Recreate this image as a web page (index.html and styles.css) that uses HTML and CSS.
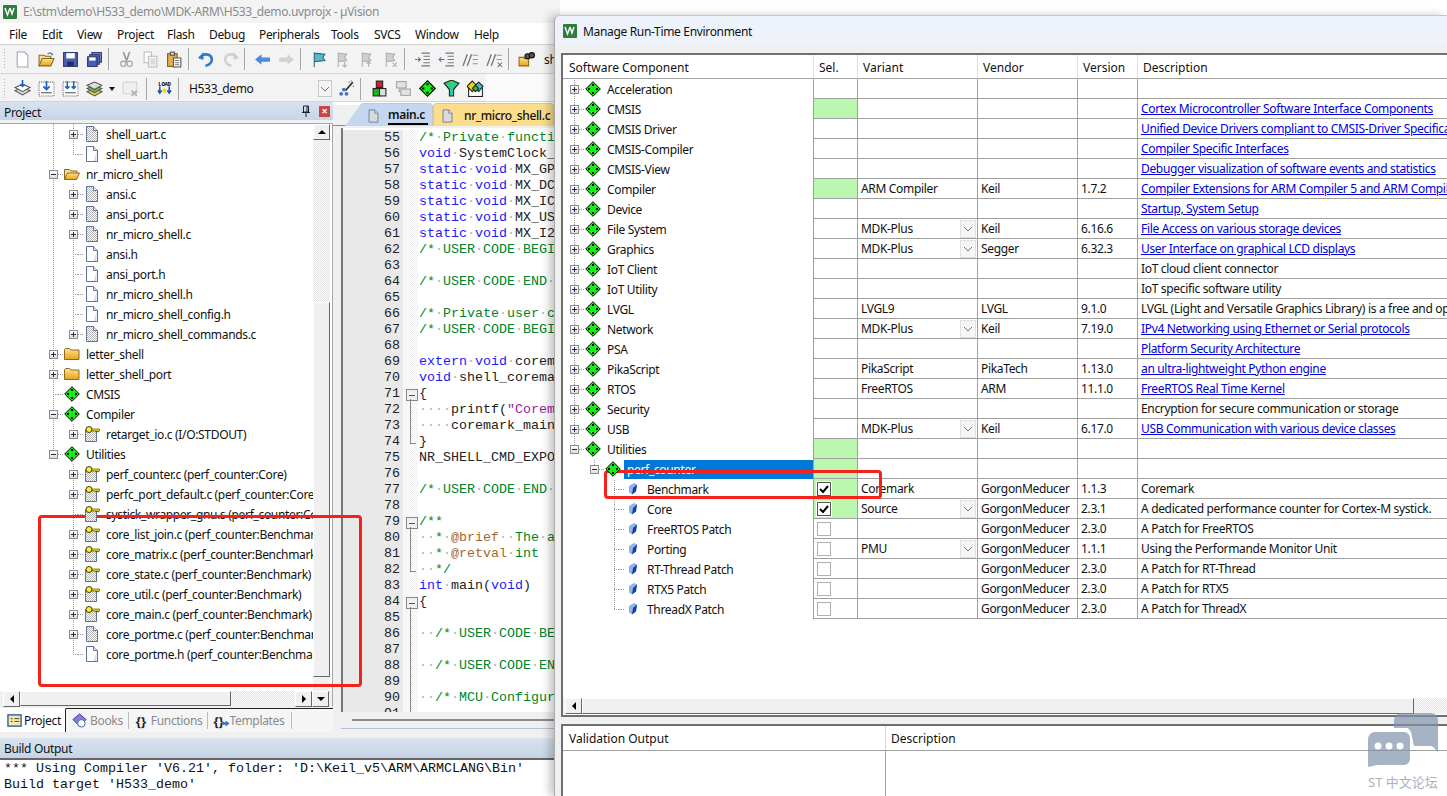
FILE: index.html
```html
<!DOCTYPE html>
<html lang="en">
<head>
    <meta charset="UTF-8">
    <title>Manage Run-Time Environment</title>
    <link rel="stylesheet" href="styles.css">
</head>
<body>
    <svg class="defs" width="0" height="0">
        <defs>
            <pattern id="dith" width="2" height="2" patternUnits="userSpaceOnUse">
                <rect width="2" height="2" fill="#fff"/>
                <rect width="1" height="1" fill="#b4b4b4"/>
                <rect x="1" y="1" width="1" height="1" fill="#b4b4b4"/>
            </pattern>
            <linearGradient id="fold" x1="0" y1="0" x2="0" y2="1">
                <stop offset="0" stop-color="#ffe48a"/>
                <stop offset="1" stop-color="#e8a21e"/>
            </linearGradient>
            <symbol id="i-file" viewBox="0 0 16 16">
                <path d="M2.500.5h7l4 4v11h-11z" fill="#fff" stroke="#5b7497"/>
                <path d="M9.500.5v4h4" fill="#dfe7f3" stroke="#5b7497"/>
                <path d="M12.500 6v9h-3z" fill="#d4def0"/>
            </symbol>
            <symbol id="i-cfile" viewBox="0 0 16 16">
                <path d="M2.500.5h7l4 4v11h-11z" fill="url(#dith)" stroke="#5b7497"/>
                <path d="M9.500.5v4h4" fill="#eef2f8" stroke="#5b7497"/>
            </symbol>
            <symbol id="i-key" viewBox="0 0 16 16">
                <path d="M1.500 3.500h11v12h-11z" fill="url(#dith)" stroke="#5b7497"/>
                <circle cx="5" cy="3.500" r="3" fill="#ffef2e" stroke="#3d3d00"/>
                <path d="M8 3h7.500v2h-1v1h-1V5h-1v1h-1V5H8z" fill="#f4d90c" stroke="#3d3d00" stroke-width=".6"/>
            </symbol>
            <symbol id="i-open" viewBox="0 0 16 16">
                <path d="M.5 13.500v-10h5l1.500 1.500h6v2" fill="#f6dc94" stroke="#8a6a20"/>
                <path d="M.5 13.500l3-6.500h12l-3 6.500z" fill="url(#fold)" stroke="#8a6a20"/>
            </symbol>
            <symbol id="i-closed" viewBox="0 0 16 16">
                <path d="M.5 13.500v-10l1-1h4l1.500 1.500h8v9.500z" fill="url(#fold)" stroke="#8a6a20"/>
            </symbol>
            <symbol id="i-dia" viewBox="0 0 16 16">
                <path d="M8 .7L15.300 8 8 15.300.7 8z" fill="#14f014" stroke="#000"/>
                <path d="M7 3h2v2H7zM3 7h2v2H3zM11 7h2v2h-2zM7 11h2v2H7z" fill="#000"/>
            </symbol>
            <symbol id="i-gem" viewBox="0 0 16 16">
                <path d="M4 5l5-3 3 1.500-1 7-4 3-3-2z" fill="#8db4e8"/>
                <path d="M8 7l4-3.500-1 7-4 3z" fill="#1f3f9c"/>
            </symbol>
            <symbol id="i-chev" viewBox="0 0 10 6">
                <path d="M1 1l4 4 4-4" fill="none" stroke="#777"/>
            </symbol>
        </defs>
    </svg>

    <div class="window main-window">
        <div class="titlebar">
            <svg class="app-icon" viewBox="0 0 14 14"><rect width="14" height="14" rx="1" fill="#2f7d3c"/><path d="M2 3l2.500 7L7 3M7 3l2 6 2-6" fill="none" stroke="#fff" stroke-width="1.400"/></svg>
            <span>E:\stm\demo\H533_demo\MDK-ARM\H533_demo.uvprojx - µVision</span>
        </div>
        <div class="menubar">
            <span style="width:33px">File</span><span style="width:35px">Edit</span><span style="width:40px">View</span><span style="width:50px">Project</span><span style="width:42px">Flash</span><span style="width:50px">Debug</span><span style="width:72px">Peripherals</span><span style="width:43px">Tools</span><span style="width:41px">SVCS</span><span style="width:59px">Window</span><span>Help</span>
        </div>
        <div class="toolbar">
            <span class="grip"></span>
            <span class="tb"><svg viewBox="0 0 16 16"><path d="M3 1h7l3 3v11H3z" fill="#fff" stroke="#9aa7b8"/></svg></span>
            <span class="tb"><svg viewBox="0 0 16 16"><path d="M1 14V4h5l1 1h5v2" fill="#f6dc94" stroke="#8a6a20"/><path d="M1 14l3-7h11l-3 7z" fill="url(#fold)" stroke="#8a6a20"/><path d="M9 3c2-2 4-1 5 1" fill="none" stroke="#4a6a94"/></svg></span>
            <span class="tb"><svg viewBox="0 0 16 16"><rect x="1.500" y="1.500" width="13" height="13" fill="#4b5fb5" stroke="#2b3570"/><rect x="4" y="2" width="8" height="5" fill="#fff"/><rect x="5" y="10" width="6" height="4" fill="#222c5c"/></svg></span>
            <span class="tb"><svg viewBox="0 0 16 16"><rect x="5.500" y="1.500" width="9" height="9" fill="#7d8dc8" stroke="#2b3570"/><rect x="3.500" y="3.500" width="9" height="9" fill="#5e70bd" stroke="#2b3570"/><rect x="1.500" y="5.500" width="9" height="9" fill="#4b5fb5" stroke="#2b3570"/><rect x="3" y="6" width="6" height="3" fill="#fff"/></svg></span>
            <span class="tb-sep"></span>
            <span class="tb off"><svg viewBox="0 0 16 16"><path d="M5 1l3 8 3-8M11 1L8 9" fill="none" stroke="#777" stroke-width="1.500"/><circle cx="5" cy="12" r="2.500" fill="none" stroke="#888"/><circle cx="11" cy="12" r="2.500" fill="none" stroke="#888"/></svg></span>
            <span class="tb off"><svg viewBox="0 0 16 16"><path d="M2 1h7v10H2z" fill="#fff" stroke="#aaa"/><path d="M6 5h8v10H6z" fill="#eee" stroke="#aaa"/><path d="M8 8h4M8 10h4M8 12h4" stroke="#bbb"/></svg></span>
            <span class="tb"><svg viewBox="0 0 16 16"><rect x="1.500" y="2.500" width="9" height="12" fill="#e0b050" stroke="#7a5a20"/><rect x="4" y="1" width="4" height="3" fill="#ccc" stroke="#555"/><path d="M7 6.500h7v8.500H7z" fill="#fff" stroke="#555"/><path d="M8.500 9h4M8.500 11h4M8.500 13h4" stroke="#777"/></svg></span>
            <span class="tb-sep"></span>
            <span class="tb"><svg viewBox="0 0 16 16"><path d="M4 8V4L1 7M4 4c5-2 9 0 9 4 0 3-2 5-6 6" fill="none" stroke="#2f78d0" stroke-width="2.400"/></svg></span>
            <span class="tb off"><svg viewBox="0 0 16 16"><path d="M12 8V4l3 3M12 4C7 2 3 4 3 8c0 3 2 5 6 6" fill="none" stroke="#c4c8cc" stroke-width="2.400"/></svg></span>
            <span class="tb-sep"></span>
            <span class="tb"><svg viewBox="0 0 16 16"><path d="M1 8l6-5v3h8v4H7v3z" fill="#4a8ae0"/></svg></span>
            <span class="tb off"><svg viewBox="0 0 16 16"><path d="M15 8L9 3v3H1v4h8v3z" fill="#c8c8c8"/></svg></span>
            <span class="tb-sep"></span>
            <span class="tb"><svg viewBox="0 0 16 16"><path d="M4 15V2l10 1-2 3 2 3-10 1" fill="#5ab8c8" stroke="#2a6a80"/></svg></span>
            <span class="tb off"><svg viewBox="0 0 16 16"><path d="M4 15V2l8 1-2 3 2 3-8 1" fill="#c4c4c4" stroke="#999"/><path d="M10 10v5M8 13l2 2 2-2" stroke="#999" fill="none"/></svg></span>
            <span class="tb off"><svg viewBox="0 0 16 16"><path d="M4 15V2l8 1-2 3 2 3-8 1" fill="#c4c4c4" stroke="#999"/><path d="M10 15v-5M8 12l2-2 2 2" stroke="#999" fill="none"/></svg></span>
            <span class="tb off"><svg viewBox="0 0 16 16"><path d="M4 15V2l8 1-2 3 2 3-8 1" fill="#c4c4c4" stroke="#999"/><path d="M10 11l4 4M14 11l-4 4" stroke="#999"/></svg></span>
            <span class="tb-sep"></span>
            <span class="tb"><svg viewBox="0 0 16 16"><path d="M7 2h8M9 5h6M9 8h6M9 11h6M7 14h8" stroke="#777"/><path d="M1 8h5M4 6l2 2-2 2" fill="none" stroke="#4a7ab0"/></svg></span>
            <span class="tb"><svg viewBox="0 0 16 16"><path d="M7 2h8M9 5h6M9 8h6M9 11h6M7 14h8" stroke="#777"/><path d="M6 8H1M3 6L1 8l2 2" fill="none" stroke="#4a7ab0"/></svg></span>
            <span class="tb"><svg viewBox="0 0 16 16"><path d="M1 14L5 3M5 14L9 3" stroke="#777" stroke-width="1.300"/><path d="M10 4h5M10 8h5M10 12h5" stroke="#999"/></svg></span>
            <span class="tb"><svg viewBox="0 0 16 16"><path d="M1 14L5 3M5 14L9 3" stroke="#777" stroke-width="1.300"/><path d="M10 4h5M10 8h5" stroke="#999"/><path d="M11 11l4 4M15 11l-4 4" stroke="#777"/></svg></span>
            <span class="tb-sep"></span>
            <span class="tb"><svg viewBox="0 0 16 16"><path d="M1 14V6h4l1 1h4v7z" fill="url(#fold)" stroke="#8a6a20"/><circle cx="9" cy="5" r="2.500" fill="#555" stroke="#111"/><circle cx="13" cy="4" r="2.500" fill="#555" stroke="#111"/></svg></span>
            <span class="tb-clip">shell</span>
        </div>
        <div class="toolbar short">
            <span class="grip"></span>
            <span class="tb"><svg viewBox="0 0 16 16"><path d="M1 10l7-3 7 3-7 4z" fill="#ddd" stroke="#555"/><path d="M1 7l7-3 7 3-7 4z" fill="#fff" stroke="#555"/><path d="M8 0v6M6 4l2 2 2-2" fill="none" stroke="#2060c0" stroke-width="1.500"/></svg></span>
            <span class="tb"><svg viewBox="0 0 16 16"><rect x="1" y="2" width="14" height="13" fill="#fff" stroke="#666" stroke-dasharray="1 1"/><path d="M8 1v8M5 6l3 3 3-3" fill="none" stroke="#2060c0" stroke-width="1.600"/><path d="M3 12h10" stroke="#555"/></svg></span>
            <span class="tb"><svg viewBox="0 0 16 16"><rect x="1" y="2" width="14" height="13" fill="#fff" stroke="#666" stroke-dasharray="1 1"/><path d="M5 1v7M3 6l2 2 2-2M11 1v7M9 6l2 2 2-2" fill="none" stroke="#2060c0" stroke-width="1.400"/><path d="M3 12h10" stroke="#555"/></svg></span>
            <span class="tb"><svg viewBox="0 0 16 16"><path d="M1 11l7-3 7 3-7 4z" fill="#e8d040" stroke="#555"/><path d="M1 8l7-3 7 3-7 4z" fill="#70c050" stroke="#555"/><path d="M1 5l7-3 7 3-7 4z" fill="#ddd" stroke="#555"/></svg></span>
            <span class="tb-arrow"></span>
            <span class="tb off"><svg viewBox="0 0 16 16"><rect x="1" y="2" width="13" height="11" fill="#eee" stroke="#aaa" stroke-dasharray="1 1"/><path d="M9 10l5 5M14 10l-5 5" stroke="#999" stroke-width="1.400"/></svg></span>
            <span class="tb-sep wide"></span>
            <span class="tb"><svg viewBox="0 0 18 18"><text x="9" y="6" class="load-text">LOAD</text><path d="M4 7v6M2 11l2 3 2-3M14 7v6M12 11l2 3 2-3" fill="none" stroke="#1f50b0" stroke-width="1.600"/><path d="M9 8l1 2h2l-1.500 1.500L11 14l-2-1-2 1 .5-2.500L6 10h2z" fill="#f0d800"/></svg></span>
            <span class="tb-sep"></span>
            <div class="target"><span>H533_demo</span><b><svg width="10" height="6"><use href="#i-chev"/></svg></b></div>
            <span class="tb"><svg viewBox="0 0 16 16"><path d="M7 10l7-8" stroke="#333" stroke-width="1.500"/><circle cx="3" cy="13" r="1.800" fill="#4a70c0"/><circle cx="8" cy="13" r="1.800" fill="#4a70c0"/><circle cx="5.500" cy="9" r="1.800" fill="#4a70c0"/><path d="M10 2h1M14 6h1M12 1h1" stroke="#d03020"/></svg></span>
            <span class="tb-sep wide2"></span>
            <span class="tb"><svg viewBox="0 0 16 16"><rect x="5" y="1" width="6" height="6" fill="#d02020" stroke="#222"/><rect x="2" y="8" width="6" height="7" fill="#20b020" stroke="#222"/><rect x="8" y="8" width="6" height="7" fill="#ddd" stroke="#222"/></svg></span>
            <span class="tb off"><svg viewBox="0 0 16 16"><rect x="1.500" y="1.500" width="9" height="6" fill="#ddd" stroke="#888"/><rect x="5.500" y="8.500" width="9" height="6" fill="#ddd" stroke="#888"/><path d="M4 8v3h1" stroke="#888" fill="none"/></svg></span>
            <span class="tb"><svg viewBox="0 0 16 16"><use href="#i-dia"/></svg></span>
            <span class="tb"><svg viewBox="0 0 16 16"><path d="M1 3l7-3 7 3-5 6v6H6V9z" fill="#30c8a0" stroke="#222"/><path d="M4 3l4-2 3 2-4 2z" fill="#30e030"/></svg></span>
            <span class="tb"><svg viewBox="0 0 16 16"><rect x="1.500" y="7.500" width="13" height="8" fill="#fff" stroke="#222"/><path d="M5 1l5 5-5 5-5-5z" fill="#f0d020" stroke="#222"/><path d="M11 2l4 4-4 5-4-5z" fill="#30c8d8" stroke="#222"/><path d="M8 5l3 3-3 3-3-3z" fill="#20d020" stroke="#222"/></svg></span>
        </div>

        <div class="workspace">
            <div class="project-panel">
                <div class="panel-head">
                    <span>Project</span>
                    <svg class="pin" viewBox="0 0 10 12"><path d="M2.500 1h5v6h-5zM1 7.500h8M5 8v4M6 1v6" fill="none" stroke="#222"/></svg>
                    <span class="panel-close">×</span>
                </div>
                <div class="tree-wrap">
                    <div class="tree">
                        <div class="node lvl3 ga gb"><i class="exp"></i><i class="dash"></i><svg class="ico"><use href="#i-cfile"/></svg><span>shell_uart.c</span></div>
                        <div class="node lvl3 ga gb-end"><i class="exp leaf"></i><i class="dash"></i><svg class="ico"><use href="#i-file"/></svg><span>shell_uart.h</span></div>
                        <div class="node lvl2 ga"><i class="exp open"></i><i class="dash"></i><svg class="ico"><use href="#i-open"/></svg><span>nr_micro_shell</span></div>
                        <div class="node lvl3 ga gb"><i class="exp"></i><i class="dash"></i><svg class="ico"><use href="#i-cfile"/></svg><span>ansi.c</span></div>
                        <div class="node lvl3 ga gb"><i class="exp"></i><i class="dash"></i><svg class="ico"><use href="#i-cfile"/></svg><span>ansi_port.c</span></div>
                        <div class="node lvl3 ga gb"><i class="exp"></i><i class="dash"></i><svg class="ico"><use href="#i-cfile"/></svg><span>nr_micro_shell.c</span></div>
                        <div class="node lvl3 ga gb"><i class="exp leaf"></i><i class="dash"></i><svg class="ico"><use href="#i-file"/></svg><span>ansi.h</span></div>
                        <div class="node lvl3 ga gb"><i class="exp leaf"></i><i class="dash"></i><svg class="ico"><use href="#i-file"/></svg><span>ansi_port.h</span></div>
                        <div class="node lvl3 ga gb"><i class="exp leaf"></i><i class="dash"></i><svg class="ico"><use href="#i-file"/></svg><span>nr_micro_shell.h</span></div>
                        <div class="node lvl3 ga gb"><i class="exp leaf"></i><i class="dash"></i><svg class="ico"><use href="#i-file"/></svg><span>nr_micro_shell_config.h</span></div>
                        <div class="node lvl3 ga gb-end"><i class="exp"></i><i class="dash"></i><svg class="ico"><use href="#i-cfile"/></svg><span>nr_micro_shell_commands.c</span></div>
                        <div class="node lvl2 ga"><i class="exp"></i><i class="dash"></i><svg class="ico"><use href="#i-closed"/></svg><span>letter_shell</span></div>
                        <div class="node lvl2 ga"><i class="exp"></i><i class="dash"></i><svg class="ico"><use href="#i-closed"/></svg><span>letter_shell_port</span></div>
                        <div class="node lvl2 ga"><i class="exp leaf"></i><i class="dash"></i><svg class="ico"><use href="#i-dia"/></svg><span>CMSIS</span></div>
                        <div class="node lvl2 ga"><i class="exp open"></i><i class="dash"></i><svg class="ico"><use href="#i-dia"/></svg><span>Compiler</span></div>
                        <div class="node lvl3 ga gb-end"><i class="exp"></i><i class="dash"></i><svg class="ico"><use href="#i-key"/></svg><span>retarget_io.c (I/O:STDOUT)</span></div>
                        <div class="node lvl2 ga-end"><i class="exp open"></i><i class="dash"></i><svg class="ico"><use href="#i-dia"/></svg><span>Utilities</span></div>
                        <div class="node lvl3 gb"><i class="exp"></i><i class="dash"></i><svg class="ico"><use href="#i-key"/></svg><span>perf_counter.c (perf_counter:Core)</span></div>
                        <div class="node lvl3 gb"><i class="exp"></i><i class="dash"></i><svg class="ico"><use href="#i-key"/></svg><span>perfc_port_default.c (perf_counter:Core)</span></div>
                        <div class="node lvl3 gb"><i class="exp leaf"></i><i class="dash"></i><svg class="ico"><use href="#i-key"/></svg><span>systick_wrapper_gnu.s (perf_counter:Core)</span></div>
                        <div class="node lvl3 gb"><i class="exp"></i><i class="dash"></i><svg class="ico"><use href="#i-key"/></svg><span>core_list_join.c (perf_counter:Benchmark)</span></div>
                        <div class="node lvl3 gb"><i class="exp"></i><i class="dash"></i><svg class="ico"><use href="#i-key"/></svg><span>core_matrix.c (perf_counter:Benchmark)</span></div>
                        <div class="node lvl3 gb"><i class="exp"></i><i class="dash"></i><svg class="ico"><use href="#i-key"/></svg><span>core_state.c (perf_counter:Benchmark)</span></div>
                        <div class="node lvl3 gb"><i class="exp"></i><i class="dash"></i><svg class="ico"><use href="#i-key"/></svg><span>core_util.c (perf_counter:Benchmark)</span></div>
                        <div class="node lvl3 gb"><i class="exp"></i><i class="dash"></i><svg class="ico"><use href="#i-key"/></svg><span>core_main.c (perf_counter:Benchmark)</span></div>
                        <div class="node lvl3 gb"><i class="exp"></i><i class="dash"></i><svg class="ico"><use href="#i-cfile"/></svg><span>core_portme.c (perf_counter:Benchmark)</span></div>
                        <div class="node lvl3 gb-end"><i class="exp leaf"></i><i class="dash"></i><svg class="ico"><use href="#i-file"/></svg><span>core_portme.h (perf_counter:Benchmark)</span></div>
                    </div>
                    <div class="vscroll">
                        <span class="sb-btn"><i class="tri up"></i></span>
                        <span class="sb-track t1"></span>
                        <span class="sb-thumb t2"></span>
                        <span class="sb-track"></span>
                    </div>
                </div>
                <div class="hscroll">
                    <span class="sb-btn"><i class="tri left"></i></span>
                    <span class="sb-thumb h1"></span>
                    <span class="sb-track h2"></span>
                    <span class="sb-btn"><i class="tri right"></i></span>
                    <span class="sb-btn"><i class="tri down"></i></span>
                </div>
                <div class="panel-tabs">
                    <span class="ptab active"><svg viewBox="0 0 16 16"><rect x="1" y="2" width="14" height="12" fill="#f5e8a0" stroke="#3060b0" stroke-width="1.500"/><path d="M4 6h2M8 6h5M4 9h2M8 9h5" stroke="#444"/></svg>Project</span>
                    <span class="ptab sep bk"><svg viewBox="0 0 16 16"><path d="M1 7l7-6 7 6-7 7z" fill="#8a7ae0" stroke="#3a3a90"/><circle cx="10" cy="11" r="4" fill="#fff" stroke="#3060b0"/></svg>Books</span>
                    <span class="ptab sep fn"><b class="brace">{}</b>Functions</span>
                    <span class="ptab sep"><b class="brace">{}</b><i class="mini-arrow"></i>Templates</span>
                </div>
            </div>

            <div class="editor-panel">
                <div class="tabs">
                    <span class="doc-tab active"><svg class="ico"><use href="#i-cfile"/></svg><span>main.c</span></span>
                    <span class="doc-tab"><svg class="ico"><use href="#i-cfile"/></svg><span>nr_micro_shell.c</span></span>
                </div>
                <div class="code">
                    <div class="ln"><b>55</b><s></s><code><u>/*<i>·</i>Private<i>·</i>function<i>·</i>prototypes</u></code></div>
                    <div class="ln"><b>56</b><s></s><code><em>void</em><i>·</i>SystemClock_Config(void);</code></div>
                    <div class="ln"><b>57</b><s></s><code><em>static</em><i>·</i><em>void</em><i>·</i>MX_GPIO_Init(void);</code></div>
                    <div class="ln"><b>58</b><s></s><code><em>static</em><i>·</i><em>void</em><i>·</i>MX_DCACHE1_Init(void);</code></div>
                    <div class="ln"><b>59</b><s></s><code><em>static</em><i>·</i><em>void</em><i>·</i>MX_ICACHE_Init(void);</code></div>
                    <div class="ln"><b>60</b><s></s><code><em>static</em><i>·</i><em>void</em><i>·</i>MX_USART1_Init(void);</code></div>
                    <div class="ln"><b>61</b><s></s><code><em>static</em><i>·</i><em>void</em><i>·</i>MX_I2C1_Init(void);</code></div>
                    <div class="ln"><b>62</b><s></s><code><u>/*<i>·</i>USER<i>·</i>CODE<i>·</i>BEGIN<i>·</i>PFP</u></code></div>
                    <div class="ln"><b>63</b><s></s><code></code></div>
                    <div class="ln"><b>64</b><s></s><code><u>/*<i>·</i>USER<i>·</i>CODE<i>·</i>END<i>·</i>PFP</u></code></div>
                    <div class="ln"><b>65</b><s></s><code></code></div>
                    <div class="ln"><b>66</b><s></s><code><u>/*<i>·</i>Private<i>·</i>user<i>·</i>code</u></code></div>
                    <div class="ln"><b>67</b><s></s><code><u>/*<i>·</i>USER<i>·</i>CODE<i>·</i>BEGIN<i>·</i>0</u></code></div>
                    <div class="ln"><b>68</b><s></s><code></code></div>
                    <div class="ln"><b>69</b><s></s><code><em>extern</em><i>·</i><em>void</em><i>·</i>coremark_main(void);</code></div>
                    <div class="ln"><b>70</b><s></s><code><em>void</em><i>·</i>shell_coremark(int</code></div>
                    <div class="ln"><b>71</b><s class="fold"></s><code>{</code></div>
                    <div class="ln"><b>72</b><s class="fold-mid"></s><code><i>····</i>printf(<q>"Coremark</q></code></div>
                    <div class="ln"><b>73</b><s class="fold-mid"></s><code><i>····</i>coremark_main();</code></div>
                    <div class="ln"><b>74</b><s class="fold-end"></s><code>}</code></div>
                    <div class="ln"><b>75</b><s></s><code>NR_SHELL_CMD_EXPORT(</code></div>
                    <div class="ln"><b>76</b><s></s><code></code></div>
                    <div class="ln"><b>77</b><s></s><code><u>/*<i>·</i>USER<i>·</i>CODE<i>·</i>END<i>·</i>0</u></code></div>
                    <div class="ln"><b>78</b><s></s><code></code></div>
                    <div class="ln"><b>79</b><s class="fold"></s><code><u>/**</u></code></div>
                    <div class="ln"><b>80</b><s class="fold-mid"></s><code><i>··</i><u>*<i>·</i><dfn>@brief</dfn><i>··</i>The<i>·</i>application</u></code></div>
                    <div class="ln"><b>81</b><s class="fold-mid"></s><code><i>··</i><u>*<i>·</i><dfn>@retval</dfn><i>·</i>int</u></code></div>
                    <div class="ln"><b>82</b><s class="fold-end"></s><code><i>··</i><u>*/</u></code></div>
                    <div class="ln"><b>83</b><s></s><code><em>int</em><i>·</i>main(<em>void</em>)</code></div>
                    <div class="ln"><b>84</b><s class="fold"></s><code>{</code></div>
                    <div class="ln"><b>85</b><s class="fold-mid"></s><code></code></div>
                    <div class="ln"><b>86</b><s class="fold-mid"></s><code><i>··</i><u>/*<i>·</i>USER<i>·</i>CODE<i>·</i>BEGIN<i>·</i>1</u></code></div>
                    <div class="ln"><b>87</b><s class="fold-mid"></s><code></code></div>
                    <div class="ln"><b>88</b><s class="fold-mid"></s><code><i>··</i><u>/*<i>·</i>USER<i>·</i>CODE<i>·</i>END<i>·</i>1</u></code></div>
                    <div class="ln"><b>89</b><s class="fold-mid"></s><code></code></div>
                    <div class="ln"><b>90</b><s class="fold-mid"></s><code><i>··</i><u>/*<i>·</i>MCU<i>·</i>Configuration</u></code></div>
                    <div class="ln"><b>91</b><s class="fold-mid"></s><code></code></div>
                </div>
                <div class="code-scroll"><span></span></div>
            </div>
        </div>

        <div class="build-head">Build Output</div>
        <pre class="build-text">*** Using Compiler 'V6.21', folder: 'D:\Keil_v5\ARM\ARMCLANG\Bin'
Build target 'H533_demo'</pre>
    </div>

    <div class="window dialog">
        <div class="dialog-title">
            <svg class="app-icon" viewBox="0 0 14 14"><rect width="14" height="14" rx="1" fill="#2f7d3c"/><path d="M2 3l2.500 7L7 3M7 3l2 6 2-6" fill="none" stroke="#fff" stroke-width="1.400"/></svg>
            <span>Manage Run-Time Environment</span>
        </div>
        <div class="rte-box">
            <div class="rte-scroll">
                <table class="rte">
                    <colgroup><col class="c1"><col class="c2"><col class="c3"><col class="c4"><col class="c5"><col class="c6"></colgroup>
                    <thead>
                        <tr><th>Software Component</th><th>Sel.</th><th>Variant</th><th>Vendor</th><th>Version</th><th>Description</th></tr>
                    </thead>
                    <tbody>
                        <tr><td><div class="node lvl1 ga"><i class="exp"></i><i class="dash"></i><svg class="ico"><use href="#i-dia"/></svg><span>Acceleration</span></div></td><td></td><td></td><td></td><td></td><td></td></tr>
                        <tr><td><div class="node lvl1 ga"><i class="exp"></i><i class="dash"></i><svg class="ico"><use href="#i-dia"/></svg><span>CMSIS</span></div></td><td class="on"></td><td></td><td></td><td></td><td><a>Cortex Microcontroller Software Interface Components</a></td></tr>
                        <tr><td><div class="node lvl1 ga"><i class="exp"></i><i class="dash"></i><svg class="ico"><use href="#i-dia"/></svg><span>CMSIS Driver</span></div></td><td></td><td></td><td></td><td></td><td><a>Unified Device Drivers compliant to CMSIS-Driver Specifications</a></td></tr>
                        <tr><td><div class="node lvl1 ga"><i class="exp"></i><i class="dash"></i><svg class="ico"><use href="#i-dia"/></svg><span>CMSIS-Compiler</span></div></td><td></td><td></td><td></td><td></td><td><a>Compiler Specific Interfaces</a></td></tr>
                        <tr><td><div class="node lvl1 ga"><i class="exp"></i><i class="dash"></i><svg class="ico"><use href="#i-dia"/></svg><span>CMSIS-View</span></div></td><td></td><td></td><td></td><td></td><td><a>Debugger visualization of software events and statistics</a></td></tr>
                        <tr><td><div class="node lvl1 ga"><i class="exp"></i><i class="dash"></i><svg class="ico"><use href="#i-dia"/></svg><span>Compiler</span></div></td><td class="on"></td><td>ARM Compiler</td><td>Keil</td><td>1.7.2</td><td><a>Compiler Extensions for ARM Compiler 5 and ARM Compiler 6</a></td></tr>
                        <tr><td><div class="node lvl1 ga"><i class="exp"></i><i class="dash"></i><svg class="ico"><use href="#i-dia"/></svg><span>Device</span></div></td><td></td><td></td><td></td><td></td><td><a>Startup, System Setup</a></td></tr>
                        <tr><td><div class="node lvl1 ga"><i class="exp"></i><i class="dash"></i><svg class="ico"><use href="#i-dia"/></svg><span>File System</span></div></td><td></td><td><div class="pick">MDK-Plus<b><svg width="10" height="6"><use href="#i-chev"/></svg></b></div></td><td>Keil</td><td>6.16.6</td><td><a>File Access on various storage devices</a></td></tr>
                        <tr><td><div class="node lvl1 ga"><i class="exp"></i><i class="dash"></i><svg class="ico"><use href="#i-dia"/></svg><span>Graphics</span></div></td><td></td><td><div class="pick">MDK-Plus<b><svg width="10" height="6"><use href="#i-chev"/></svg></b></div></td><td>Segger</td><td>6.32.3</td><td><a>User Interface on graphical LCD displays</a></td></tr>
                        <tr><td><div class="node lvl1 ga"><i class="exp"></i><i class="dash"></i><svg class="ico"><use href="#i-dia"/></svg><span>IoT Client</span></div></td><td></td><td></td><td></td><td></td><td>IoT cloud client connector</td></tr>
                        <tr><td><div class="node lvl1 ga"><i class="exp"></i><i class="dash"></i><svg class="ico"><use href="#i-dia"/></svg><span>IoT Utility</span></div></td><td></td><td></td><td></td><td></td><td>IoT specific software utility</td></tr>
                        <tr><td><div class="node lvl1 ga"><i class="exp"></i><i class="dash"></i><svg class="ico"><use href="#i-dia"/></svg><span>LVGL</span></div></td><td></td><td>LVGL9</td><td>LVGL</td><td>9.1.0</td><td>LVGL (Light and Versatile Graphics Library) is a free and open-source</td></tr>
                        <tr><td><div class="node lvl1 ga"><i class="exp"></i><i class="dash"></i><svg class="ico"><use href="#i-dia"/></svg><span>Network</span></div></td><td></td><td><div class="pick">MDK-Plus<b><svg width="10" height="6"><use href="#i-chev"/></svg></b></div></td><td>Keil</td><td>7.19.0</td><td><a>IPv4 Networking using Ethernet or Serial protocols</a></td></tr>
                        <tr><td><div class="node lvl1 ga"><i class="exp"></i><i class="dash"></i><svg class="ico"><use href="#i-dia"/></svg><span>PSA</span></div></td><td></td><td></td><td></td><td></td><td><a>Platform Security Architecture</a></td></tr>
                        <tr><td><div class="node lvl1 ga"><i class="exp"></i><i class="dash"></i><svg class="ico"><use href="#i-dia"/></svg><span>PikaScript</span></div></td><td></td><td>PikaScript</td><td>PikaTech</td><td>1.13.0</td><td><a>an ultra-lightweight Python engine</a></td></tr>
                        <tr><td><div class="node lvl1 ga"><i class="exp"></i><i class="dash"></i><svg class="ico"><use href="#i-dia"/></svg><span>RTOS</span></div></td><td></td><td>FreeRTOS</td><td>ARM</td><td>11.1.0</td><td><a>FreeRTOS Real Time Kernel</a></td></tr>
                        <tr><td><div class="node lvl1 ga"><i class="exp"></i><i class="dash"></i><svg class="ico"><use href="#i-dia"/></svg><span>Security</span></div></td><td></td><td></td><td></td><td></td><td>Encryption for secure communication or storage</td></tr>
                        <tr><td><div class="node lvl1 ga"><i class="exp"></i><i class="dash"></i><svg class="ico"><use href="#i-dia"/></svg><span>USB</span></div></td><td></td><td><div class="pick">MDK-Plus<b><svg width="10" height="6"><use href="#i-chev"/></svg></b></div></td><td>Keil</td><td>6.17.0</td><td><a>USB Communication with various device classes</a></td></tr>
                        <tr><td><div class="node lvl1 ga-end"><i class="exp open"></i><i class="dash"></i><svg class="ico"><use href="#i-dia"/></svg><span>Utilities</span></div></td><td class="on"></td><td></td><td></td><td></td><td></td></tr>
                        <tr><td><div class="node lvl2 gb-end"><i class="exp open"></i><i class="dash"></i><svg class="ico"><use href="#i-dia"/></svg><span class="selected">perf_counter</span></div></td><td class="on"></td><td></td><td></td><td></td><td></td></tr>
                        <tr><td><div class="node lvl3 gc"><i class="exp leaf"></i><i class="dash"></i><svg class="ico"><use href="#i-gem"/></svg><span>Benchmark</span></div></td><td class="on"><span class="check on"><svg viewBox="0 0 12 12"><path d="M2 6l3 3 5-6" fill="none" stroke="#000" stroke-width="2"/></svg></span></td><td>Coremark</td><td>GorgonMeducer</td><td>1.1.3</td><td>Coremark</td></tr>
                        <tr><td><div class="node lvl3 gc"><i class="exp leaf"></i><i class="dash"></i><svg class="ico"><use href="#i-gem"/></svg><span>Core</span></div></td><td class="on"><span class="check on"><svg viewBox="0 0 12 12"><path d="M2 6l3 3 5-6" fill="none" stroke="#000" stroke-width="2"/></svg></span></td><td><div class="pick">Source<b><svg width="10" height="6"><use href="#i-chev"/></svg></b></div></td><td>GorgonMeducer</td><td>2.3.1</td><td>A dedicated performance counter for Cortex-M systick.</td></tr>
                        <tr><td><div class="node lvl3 gc"><i class="exp leaf"></i><i class="dash"></i><svg class="ico"><use href="#i-gem"/></svg><span>FreeRTOS Patch</span></div></td><td><span class="check"></span></td><td></td><td>GorgonMeducer</td><td>2.3.0</td><td>A Patch for FreeRTOS</td></tr>
                        <tr><td><div class="node lvl3 gc"><i class="exp leaf"></i><i class="dash"></i><svg class="ico"><use href="#i-gem"/></svg><span>Porting</span></div></td><td><span class="check"></span></td><td><div class="pick">PMU<b><svg width="10" height="6"><use href="#i-chev"/></svg></b></div></td><td>GorgonMeducer</td><td>1.1.1</td><td>Using the Performande Monitor Unit</td></tr>
                        <tr><td><div class="node lvl3 gc"><i class="exp leaf"></i><i class="dash"></i><svg class="ico"><use href="#i-gem"/></svg><span>RT-Thread Patch</span></div></td><td><span class="check"></span></td><td></td><td>GorgonMeducer</td><td>2.3.0</td><td>A Patch for RT-Thread</td></tr>
                        <tr><td><div class="node lvl3 gc"><i class="exp leaf"></i><i class="dash"></i><svg class="ico"><use href="#i-gem"/></svg><span>RTX5 Patch</span></div></td><td><span class="check"></span></td><td></td><td>GorgonMeducer</td><td>2.3.0</td><td>A Patch for RTX5</td></tr>
                        <tr><td><div class="node lvl3 gc-end"><i class="exp leaf"></i><i class="dash"></i><svg class="ico"><use href="#i-gem"/></svg><span>ThreadX Patch</span></div></td><td><span class="check"></span></td><td></td><td>GorgonMeducer</td><td>2.3.0</td><td>A Patch for ThreadX</td></tr>
                    </tbody>
                </table>
            </div>
            <div class="rte-hscroll">
                <span class="sb-btn"><i class="tri left"></i></span>
                <span class="sb-thumb rh1"></span>
                <span class="sb-track rh2"></span>
            </div>
        </div>
        <div class="valid-box">
            <div class="valid-head"><span class="v1">Validation Output</span><span>Description</span></div>
            <div class="valid-body"><span class="v1"></span></div>
        </div>
    </div>

    <div class="mark mark-project"></div>
    <div class="mark mark-rte"></div>

    <div class="watermark">
        <svg class="wm-icon" viewBox="0 0 70 55" width="70" height="55">
            <path d="M33 0h30a7 7 0 0 1 7 7v32L64 33H46l-3-14-3-4H26V7a7 7 0 0 1 7-7z" fill="#7f93ad" opacity=".7"/>
            <path d="M7 19h29a6 6 0 0 1 6 6v21a6 6 0 0 1-6 6H9L0 54V26a7 7 0 0 1 7-7z" fill="#7f93ad" opacity=".7"/>
            <circle cx="10" cy="33" r="3.500" fill="#fff"/><circle cx="21" cy="33" r="3.500" fill="#fff"/><circle cx="32" cy="33" r="3.500" fill="#fff"/>
        </svg>
        <span>ST 中文论坛</span>
    </div>
</body>
</html>
```

FILE: styles.css
```css
* {
    box-sizing: border-box;
}
html, body {
    margin: 0;
    height: 100%;
    overflow: hidden;
    background: #fff;
}
body {
    position: relative;
    font-family: "Noto Sans", sans-serif;
    font-size: 12px;
    letter-spacing: -0.33px;
    color: #111;
}
.defs {
    display: block;
    height: 0;
}

/* windows */
.window {
    position: absolute;
    top: 0;
    display: flex;
    flex-direction: column;
}
.main-window {
    left: 0;
    width: 560px;
    height: 796px;
    background: #f0f0f0;
}
.dialog {
    left: 554px;
    top: 15px;
    width: 893px;
    height: 781px;
    background: #f0f0f0;
    border-left: 1px solid #aaa;
    border-top: 1px solid #c8c8c8;
    border-top-left-radius: 6px;
    box-shadow: -5px 0 9px rgba(0, 0, 0, 0.22);
}

.app-icon {
    width: 14px;
    height: 14px;
    flex: none;
}
.titlebar {
    height: 23px;
    display: flex;
    align-items: center;
    gap: 6px;
    padding-left: 3px;
    color: #8a8a8a;
    background: #f3f3f3;
    font-size: 12px;
}
.menubar {
    height: 22px;
    display: flex;
    align-items: center;
    padding: 1px 0 0 9px;
    background: #fff;
    border-bottom: 1px solid #d0d0d0;
}
.menubar span {
    flex: none;
}

/* toolbars */
.toolbar {
    height: 28.5px;
    display: flex;
    align-items: center;
    padding: 1px 0 0 4px;
    background: #f3f3f3;
    border-bottom: 1px solid #d4d4d4;
}
.toolbar.short {
    padding-top: 3px;
    background: linear-gradient(to right, #f3f3f3 486px, #fafafa 486px);
}
.grip {
    width: 6px;
    height: 20px;
    background: repeating-linear-gradient(to bottom, #b0b0b0 0 1px, transparent 1px 3px) 0 0 / 1px 100% no-repeat;
}
.tb {
    width: 24px;
    height: 20px;
    display: flex;
    align-items: center;
    justify-content: center;
    flex: none;
}
.tb svg {
    width: 17px;
    height: 17px;
}
.tb.off {
    opacity: 0.75;
}
.tb-sep {
    width: 1px;
    height: 22px;
    margin: 0 5px 0 2px;
    background: #a8a8a8;
    flex: none;
}
.tb-sep.wide {
    margin-left: 4px;
}
.tb-sep.wide2 {
    margin-right: 6px;
}
.tb-arrow {
    width: 6px;
    height: 4px;
    margin: 0 3px;
    border-top: 4px solid #111;
    border-left: 3px solid transparent;
    border-right: 3px solid transparent;
}
.tb-clip {
    margin-left: 6px;
    width: 16px;
    overflow: hidden;
}
.load-text {
    font-family: "Liberation Mono", monospace;
    font-size: 6px;
    font-weight: bold;
    text-anchor: middle;
}
.target {
    width: 148px;
    height: 18px;
    display: flex;
    align-items: center;
    justify-content: space-between;
    padding-left: 5px;
    margin-right: 2px;
}
.target b {
    width: 14px;
    height: 17px;
    display: flex;
    align-items: center;
    justify-content: center;
    background: #f4f4f4;
    border: 1px solid #c8c8c8;
}

/* workspace */
.workspace {
    flex: 1;
    min-height: 0;
    display: flex;
}
.project-panel {
    width: 333px;
    flex: none;
    display: flex;
    flex-direction: column;
}
.panel-head {
    height: 18px;
    display: flex;
    align-items: center;
    padding: 0 3px 0 4px;
    background: linear-gradient(#d8e3f0, #c6d4e6);
}
.panel-head > span:first-child {
    flex: 1;
    padding-top: 2px;
}
.pin {
    width: 10px;
    height: 12px;
    margin-right: 8px;
}
.panel-close {
    width: 11px;
    height: 11px;
    background: #c9454a;
    color: #fff;
    font-size: 11px;
    line-height: 10px;
    text-align: center;
    font-weight: bold;
}
.tree-wrap {
    height: 571px;
    margin-top: 3px;
    display: flex;
    background: #fff;
    border-top: 1px solid #a8a8a8;
    border-right: 1px solid #a8a8a8;
}
.tree {
    flex: 1;
    min-width: 0;
    overflow: hidden;
}

/* tree rows, shared by the project panel and the component table */
.node {
    position: relative;
    height: 20px;
    display: flex;
    align-items: center;
    white-space: nowrap;
}
.rte .node {
    height: 19px;
}
.tree .lvl2 { padding-left: 49px; }
.tree .lvl3 { padding-left: 69px; }
.rte .lvl1 { padding-left: 7px; }
.rte .lvl2 { padding-left: 27px; }
.rte .lvl3 { padding-left: 47px; }
.node .ico {
    width: 16px;
    height: 16px;
    flex: none;
    position: relative;
    z-index: 1;
}
.node span {
    margin-left: 6px;
}
.exp {
    width: 9px;
    height: 9px;
    flex: none;
    position: relative;
    z-index: 1;
    border: 1px solid #8c8c8c;
    background:
        linear-gradient(#1d2a60, #1d2a60) center / 5px 1px no-repeat,
        linear-gradient(#1d2a60, #1d2a60) center / 1px 5px no-repeat,
        linear-gradient(#fff, #dcdcdc);
}
.exp.open {
    background:
        linear-gradient(#1d2a60, #1d2a60) center / 5px 1px no-repeat,
        linear-gradient(#fff, #dcdcdc);
}
.exp.leaf {
    border: 0;
    background: repeating-linear-gradient(to right, #9a9a9a 0 1px, transparent 1px 2px) right center / 5px 1px no-repeat;
}
.dash {
    width: 6px;
    height: 1px;
    flex: none;
    background: repeating-linear-gradient(to right, #9a9a9a 0 1px, transparent 1px 2px);
}

/* dotted guide lines */
.ga::before, .ga-end::before, .gb::after, .gb-end::after, .gc::after, .gc-end::after {
    content: "";
    position: absolute;
    top: 0;
    bottom: 0;
    width: 1px;
    background: repeating-linear-gradient(to bottom, #9a9a9a 0 1px, transparent 1px 2px);
}
.rte .ga::before, .rte .gc::after {
    bottom: -1px;
}
.ga-end::before, .gb-end::after, .gc-end::after {
    bottom: 50%;
}
.tree .ga::before, .tree .ga-end::before { left: 53px; }
.tree .gb::after, .tree .gb-end::after { left: 73px; }
.rte .ga::before, .rte .ga-end::before { left: 11px; }
.rte .gb-end::after { left: 31px; }
.rte .gc::after, .rte .gc-end::after { left: 51px; }

/* scrollbars */
.vscroll {
    width: 17px;
    margin-right: 2px;
    flex: none;
    display: flex;
    flex-direction: column;
    background: #f0f0f0;
}
.sb-btn {
    width: 17px;
    height: 16px;
    flex: none;
    display: flex;
    align-items: center;
    justify-content: center;
    background: #f0f0f0;
    border: 1px solid;
    border-color: #fff #666 #666 #fff;
}
.sb-thumb {
    display: block;
    flex: none;
    background: #f0f0f0;
    border: 1px solid;
    border-color: #fff #666 #666 #fff;
}
.sb-track {
    display: block;
    flex: 1;
    background: repeating-conic-gradient(#e6e6e6 0 25%, #fbfbfb 0 50%) 0 0 / 2px 2px;
}
.t1 {
    flex: none;
    height: 162px;
}
.t2 {
    height: 375px;
}
.tri {
    width: 0;
    height: 0;
    border: 4px solid transparent;
}
.tri.up { border-top: 0; border-bottom-color: #000; }
.tri.down { border-bottom: 0; border-top-color: #000; }
.tri.left { border-left: 0; border-right-color: #000; }
.tri.right { border-right: 0; border-left-color: #000; }
.hscroll {
    height: 15px;
    display: flex;
    padding-left: 3px;
    padding-right: 3px;
    background: #f0f0f0;
    border-right: 1px solid #a8a8a8;
}
.h1 {
    width: 211px;
}
.panel-tabs {
    height: 24px;
    margin-top: 2px;
    display: flex;
    align-items: stretch;
    background: #f5f5f5;
    border-top: 1px solid #222;
    color: #8a8a8a;
}
.ptab {
    display: flex;
    align-items: center;
    gap: 3px;
    padding: 0 7px 0 4px;
}
.ptab svg {
    width: 15px;
    height: 15px;
    flex: none;
}
.ptab.active {
    width: 66px;
    flex: none;
    margin-top: -1px;
    color: #111;
    background: #fff;
    border: 1px solid #222;
    border-width: 1px 1px 0 0;
    border-top-color: #fff;
    padding: 0 0 0 7px;
    gap: 2px;
}
.ptab.sep {
    border-right: 1px solid #bbb;
    margin: 3px 0;
    padding: 0 7px 0 6px;
}
.ptab.bk {
    padding-right: 5px;
}
.ptab.fn {
    padding: 0 4px 0 7px;
    gap: 4px;
}
.brace {
    width: 11px;
    flex: none;
    color: #222;
    font-weight: bold;
    font-size: 13px;
    letter-spacing: 0;
}
.mini-arrow {
    width: 8px;
    height: 6px;
    flex: none;
    margin: 6px -3px 0 -6px;
    background: #2f78d0;
    clip-path: polygon(0 30%, 50% 30%, 50% 0, 100% 50%, 50% 100%, 50% 70%, 0 70%);
}

/* editor */
.editor-panel {
    flex: 1;
    min-width: 0;
    display: flex;
    flex-direction: column;
    padding-left: 8px;
}
.tabs {
    height: 24px;
    display: flex;
    padding-left: 27px;
    margin-left: -8px;
    background: linear-gradient(#fff 0 14%, #f0f0f0 14%);
    border-bottom: 1px solid #8c8c8c;
}
.doc-tab {
    height: 23px;
    width: 121px;
    flex: none;
    display: flex;
    align-items: center;
    padding: 1px 0 0 7px;
    margin-top: 1px;
    background: #fbdd8b;
    border-radius: 4px 4px 0 0;
    border: 1px solid #c8c8c8;
    border-bottom: 0;
}
.doc-tab .ico {
    width: 13px;
    height: 16px;
    flex: none;
}
.doc-tab span {
    margin-left: 10px;
    font-weight: 500;
    white-space: nowrap;
}
.doc-tab.active {
    width: 73px;
    padding-left: 6px;
    background: #c5d7f0;
    position: relative;
}
.doc-tab.active::before {
    content: "";
    position: absolute;
    left: -16px;
    top: 0;
    bottom: 0;
    width: 16px;
    background: #c5d7f0;
    clip-path: polygon(100% 0, 100% 100%, 0 100%);
}
.doc-tab.active span {
    border-bottom: 2px solid #000;
    padding: 0 3px 0 0;
    line-height: 16px;
    margin-left: 8px;
    font-weight: 600;
}
.code {
    height: 584px;
    margin-top: 2px;
    padding-top: 2px;
    overflow: hidden;
    background: #fff;
    border-left: 2px solid #777;
    font-family: "Liberation Mono", monospace;
    font-size: 13.33px;
    letter-spacing: 0;
    color: #222;
}
.ln {
    height: 16px;
    display: flex;
    line-height: 16px;
    white-space: pre;
}
.ln b {
    width: 60px;
    padding-right: 3px;
    flex: none;
    font-weight: normal;
    text-align: right;
    background: #e9e9e9;
}
.ln s {
    width: 15px;
    flex: none;
    position: relative;
    background: repeating-conic-gradient(#efefef 0 25%, #fff 0 50%) 0 0 / 2px 2px;
}
.ln code {
    flex: none;
    font: inherit;
    padding-left: 1px;
}
.ln i {
    font-style: normal;
    color: #b0b0b0;
}
.ln u {
    text-decoration: none;
    color: #00842a;
}
.ln em {
    font-style: normal;
    color: #1a1aff;
}
.ln q {
    quotes: none;
    color: #a0209c;
}
.ln dfn {
    font-style: normal;
    color: #a8682c;
}
.fold::before {
    content: "";
    position: absolute;
    left: 3px;
    top: 3px;
    width: 10px;
    height: 10px;
    background: linear-gradient(#555, #555) center / 6px 1px no-repeat, #f0f0f0;
    border: 1px solid #888;
}
.fold::after, .fold-mid::after {
    content: "";
    position: absolute;
    left: 7px;
    top: 13px;
    bottom: 0;
    width: 1px;
    background: #888;
}
.fold-mid::after {
    top: 0;
}
.fold-end::after {
    content: "";
    position: absolute;
    left: 7px;
    top: 0;
    width: 5px;
    height: 9px;
    border-left: 1px solid #888;
    border-bottom: 1px solid #888;
}
.code-scroll {
    height: 17px;
    display: flex;
    align-items: center;
    padding-left: 11px;
    background: #f0f0f0;
    border-bottom: 1px solid #b4c0d8;
}
.code-scroll span {
    width: 100%;
    height: 2px;
    background: #8a8a8a;
}
.build-head {
    height: 20px;
    margin-top: 6px;
    line-height: 21px;
    padding-left: 4px;
    background: linear-gradient(#d8e3f0, #c6d4e6);
}
.build-text {
    margin: 0;
    height: 38px;
    padding: 1px 0 0 4px;
    flex: none;
    background: #fff;
    border-top: 2px solid #666;
    font-family: "Liberation Mono", monospace;
    font-size: 13.33px;
    letter-spacing: 0;
    line-height: 16px;
    color: #111;
    overflow: hidden;
}

/* dialog */
.dialog-title {
    height: 30px;
    flex: none;
    display: flex;
    align-items: center;
    gap: 6px;
    padding-left: 8px;
    background: #edf2fb;
    border-top-left-radius: 6px;
}
.rte-box {
    height: 664px;
    margin: 7px 0 0 6px;
    flex: none;
    display: flex;
    flex-direction: column;
    background: #fff;
    border-top: 2px solid #6e6e6e;
    border-left: 2px solid #6e6e6e;
    border-bottom: 2px solid #6e6e6e;
}
.rte-scroll {
    flex: 1;
    min-height: 0;
    overflow: hidden;
}
.rte {
    width: 974px;
    table-layout: fixed;
    border-collapse: separate;
    border-spacing: 0;
}
.c1 { width: 250px; }
.c2 { width: 44px; }
.c3 { width: 120px; }
.c4 { width: 100px; }
.c5 { width: 60px; }
.c6 { width: 400px; }
.rte th {
    height: 24px;
    padding: 2px 0 0 5px;
    font-weight: normal;
    letter-spacing: 0;
    text-align: left;
    border-bottom: 1px solid #a0a0a0;
    border-left: 1px solid #e2e2e2;
}
.rte th:first-child {
    padding-left: 6px;
    border-left: 0;
}
.rte td {
    height: 20px;
    padding: 0 0 0 3px;
    border-left: 1px solid #a0a0a0;
    border-bottom: 1px solid #a0a0a0;
    white-space: nowrap;
    overflow: hidden;
}
.rte td:first-child {
    padding: 0;
    border: 0;
}
.rte td.on {
    background: #bcf7b0;
}
.rte a {
    color: #0000e0;
    text-decoration: underline;
}
.node span.selected {
    flex: 1;
    height: 19px;
    line-height: 19px;
    margin-left: 3px;
    padding-left: 3px;
    background: #0078d7;
    color: #fff;
}
.pick {
    height: 19px;
    display: flex;
    align-items: center;
    justify-content: space-between;
    padding-right: 1px;
}
.pick b {
    width: 16px;
    height: 18px;
    display: flex;
    align-items: center;
    justify-content: center;
    background: #f6f6f6;
    border: 1px solid #e0e0e0;
}
.check {
    display: block;
    width: 14px;
    height: 14px;
    background: #fff;
    border: 1px solid #b0b0b0;
    box-shadow: 0 0 0 1px #fff;
}
.check.on {
    border-color: #555;
}
.check svg {
    display: block;
    width: 12px;
    height: 12px;
}
.rte-hscroll {
    height: 16px;
    margin-bottom: 1px;
    flex: none;
    display: flex;
    padding-left: 2px;
    background: #f0f0f0;
}
.rh1 {
    width: 832px;
}
.valid-box {
    flex: 1;
    margin: 7px 0 0 6px;
    background: #fff;
    border-top: 2px solid #6e6e6e;
    border-left: 2px solid #6e6e6e;
}
.valid-head {
    height: 25px;
    display: flex;
    align-items: center;
    letter-spacing: 0;
    border-bottom: 1px solid #a0a0a0;
}
.valid-head span:last-child {
    padding-left: 5px;
}
.v1 {
    width: 323px;
    padding-left: 6px;
    height: 100%;
    display: flex;
    align-items: center;
    border-right: 1px solid #d8d8d8;
}
.valid-body {
    height: 50px;
}
.valid-body .v1 {
    border-right-color: #a0a0a0;
}

/* overlays */
.mark {
    position: absolute;
    border: 3px solid #f5221c;
    border-radius: 4px;
}
.mark-project {
    left: 38px;
    top: 515px;
    width: 324px;
    height: 172px;
}
.mark-rte {
    left: 604px;
    top: 470px;
    width: 278px;
    height: 29px;
}
.watermark {
    position: absolute;
    left: 1368px;
    top: 713px;
    width: 70px;
}
.wm-icon {
    display: block;
}
.watermark span {
    display: block;
    margin-top: 6px;
    font-family: "Noto Sans", "Noto Sans CJK SC", sans-serif;
    font-size: 13px;
    letter-spacing: 0;
    line-height: 16px;
    white-space: nowrap;
    color: #a6b2c4;
}
```
